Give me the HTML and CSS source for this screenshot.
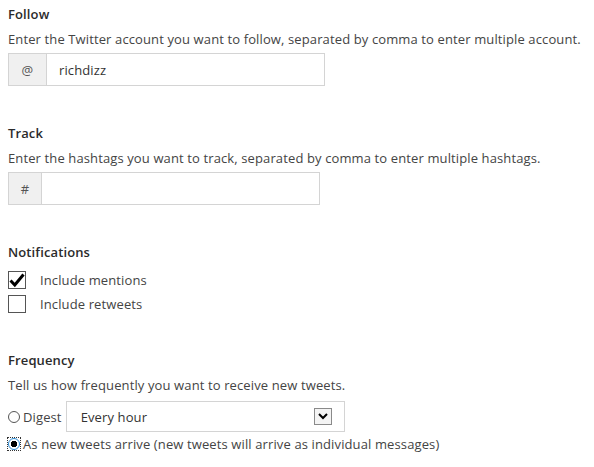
FILE: index.html
```html
<!DOCTYPE html>
<html>
<head>
<meta charset="utf-8">
<link rel="stylesheet" href="styles.css">
</head>
<body>
<div class="page">
  <section class="section">
    <h3 class="heading">Follow</h3>
    <p class="desc">Enter the Twitter account you want to follow, separated by comma to enter multiple account.</p>
    <div class="field field-follow">
      <span class="addon addon-at">@</span>
      <span class="value">richdizz</span>
    </div>
  </section>

  <section class="section">
    <h3 class="heading">Track</h3>
    <p class="desc">Enter the hashtags you want to track, separated by comma to enter multiple hashtags.</p>
    <div class="field field-track">
      <span class="addon addon-hash">#</span>
      <span class="value"></span>
    </div>
  </section>

  <section class="section">
    <h3 class="heading">Notifications</h3>
    <div class="checks">
      <div class="check-row">
        <span class="box">
          <svg width="18" height="18" viewBox="0 0 18 18"><path d="M2.5 9.5 L6.8 14 L15.5 3.5" fill="none" stroke="#000" stroke-width="3" stroke-linejoin="miter"/></svg>
        </span>
        <span class="check-label">Include mentions</span>
      </div>
      <div class="check-row">
        <span class="box"></span>
        <span class="check-label">Include retweets</span>
      </div>
    </div>
  </section>

  <section class="section section-last">
    <h3 class="heading">Frequency</h3>
    <p class="desc">Tell us how frequently you want to receive new tweets.</p>
    <div class="digest-row">
      <span class="radio"></span>
      <span class="radio-label">Digest</span>
      <div class="select">
        <span class="select-value">Every hour</span>
        <span class="select-btn">
          <svg width="10" height="7" viewBox="0 0 10 7"><path d="M1 1 L5 5 L9 1" fill="none" stroke="#000" stroke-width="2"/></svg>
        </span>
      </div>
    </div>
    <div class="arrive-row">
      <span class="radio-focus"><span class="radio radio-on"></span></span>
      <span class="radio-label">As new tweets arrive (new tweets will arrive as individual messages)</span>
    </div>
  </section>
</div>
</body>
</html>
```

FILE: styles.css
```css
html, body {
  margin: 0;
  padding: 0;
  background: #fff;
}

body {
  font-family: "Open Sans", "Noto Sans", sans-serif;
  font-size: 13px;
  line-height: 18px;
  letter-spacing: 0.12px;
  color: #444;
}

.page {
  padding: 5px 8px 0 8px;
}

.section {
  margin-bottom: 38px;
}

.section-last {
  margin-bottom: 0;
}

.heading {
  margin: 0;
  font-size: 13px;
  font-weight: 600;
  line-height: 18px;
  color: #2b2b2b;
}

.desc {
  margin: 7px 0 0 0;
  line-height: 18px;
  white-space: nowrap;
}

.field {
  margin-top: 5px;
  display: flex;
  height: 33px;
  box-sizing: border-box;
  border: 1px solid #d4d4d4;
  background: #fff;
}

.field-follow {
  width: 317px;
}

.field-track {
  width: 312px;
}

.addon {
  background: #f0f0f0;
  border-right: 1px solid #d4d4d4;
  display: flex;
  align-items: center;
  justify-content: center;
  color: #555;
  font-size: 13px;
}

.addon-at {
  width: 37px;
}

.addon-hash {
  width: 32px;
}

.value {
  display: flex;
  align-items: center;
  padding-left: 12px;
  color: #333;
}

.checks {
  margin-top: 9px;
  display: flex;
  flex-direction: column;
  gap: 5px;
}

.check-row {
  display: flex;
  align-items: center;
  height: 19px;
}

.box {
  width: 18px;
  height: 18px;
  box-sizing: border-box;
  border: 1px solid #555;
  background: #fff;
  position: relative;
}

.box svg {
  position: absolute;
  left: -1px;
  top: -1px;
}

.check-label {
  margin-left: 14px;
}

.digest-row {
  margin-top: 7px;
  display: flex;
  align-items: center;
}

.radio {
  width: 12px;
  height: 12px;
  box-sizing: border-box;
  border: 1px solid #555;
  border-radius: 50%;
  background: #fff;
  display: inline-block;
}

.radio-label {
  margin-left: 3px;
}

.digest-row .radio-label {
  margin-right: 4px;
}

.select {
  width: 279px;
  height: 31px;
  box-sizing: border-box;
  border: 1px solid #d4d4d4;
  display: flex;
  align-items: center;
  justify-content: space-between;
  padding: 0 12px 0 14px;
  color: #333;
}

.select-btn {
  width: 18px;
  height: 17px;
  box-sizing: border-box;
  border: 1px solid #8a8a8a;
  background: #f4f4f4;
  display: flex;
  align-items: center;
  justify-content: center;
}

.arrive-row {
  margin-top: 3px;
  display: flex;
  align-items: center;
  margin-left: -1px;
}

.radio-focus {
  width: 14px;
  height: 14px;
  box-sizing: border-box;
  border: 1px dotted #333;
  display: flex;
  align-items: center;
  justify-content: center;
}

.radio-on {
  width: 12px;
  height: 12px;
  border-color: #2a8ad4;
  background: radial-gradient(circle, #000 0, #000 3px, #fff 3.5px);
}

.arrive-row .radio-label {
  margin-left: 2px;
}
```
